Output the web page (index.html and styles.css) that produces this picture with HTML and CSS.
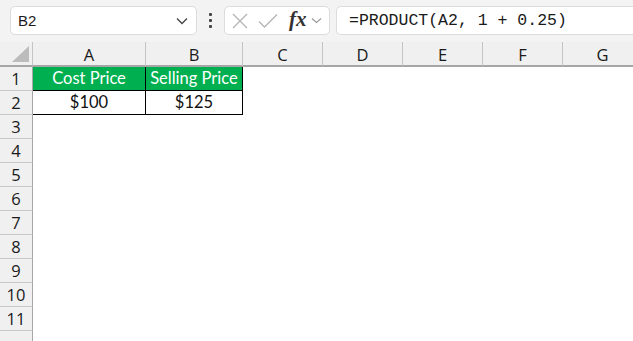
FILE: index.html
```html
<!DOCTYPE html>
<html>
<head>
<meta charset="utf-8">
<link rel="stylesheet" href="styles.css">
</head>
<body>
<div class="toolbar">
  <div class="namebox">
    <span class="name">B2</span>
    <svg class="chev" width="12" height="8" viewBox="0 0 12 8"><path d="M1 1.5 L6 6.5 L11 1.5" fill="none" stroke="#444" stroke-width="1.3"/></svg>
  </div>
  <div class="dots"><span></span><span></span><span></span></div>
  <div class="fxbox">
    <svg class="ico" width="16" height="16" viewBox="0 0 16 16"><path d="M1 1 L15 15 M15 1 L1 15" stroke="#b4b4b4" stroke-width="1.3" fill="none"/></svg>
    <svg class="ico" width="20" height="16" viewBox="0 0 20 16"><path d="M1 8.5 L6.5 14 L19 1.5" stroke="#b4b4b4" stroke-width="1.3" fill="none"/></svg>
    <span class="fx">fx</span>
    <svg class="chev2" width="11" height="7" viewBox="0 0 11 7"><path d="M1 1.5 L5.5 5.5 L10 1.5" fill="none" stroke="#999" stroke-width="1.1"/></svg>
  </div>
  <div class="formula">=PRODUCT(A2, 1 + 0.25)</div>
</div>
<div class="sheet">
  <div class="corner"><svg width="17" height="16" viewBox="0 0 17 16"><path d="M17 0 L17 16 L0 16 Z" fill="#bcbcbc"/></svg></div>
  <div class="ch">A</div><div class="ch">B</div><div class="ch">C</div><div class="ch">D</div><div class="ch">E</div><div class="ch">F</div><div class="ch">G</div>

  <div class="rh">1</div><div class="c hd">Cost Price</div><div class="c hd">Selling Price</div><div class="c"></div><div class="c"></div><div class="c"></div><div class="c"></div><div class="c"></div>
  <div class="rh">2</div><div class="c dt">$100</div><div class="c dt">$125</div><div class="c"></div><div class="c"></div><div class="c"></div><div class="c"></div><div class="c"></div>
  <div class="rh">3</div><div class="c"></div><div class="c"></div><div class="c"></div><div class="c"></div><div class="c"></div><div class="c"></div><div class="c"></div>
  <div class="rh">4</div><div class="c"></div><div class="c"></div><div class="c"></div><div class="c"></div><div class="c"></div><div class="c"></div><div class="c"></div>
  <div class="rh">5</div><div class="c"></div><div class="c"></div><div class="c"></div><div class="c"></div><div class="c"></div><div class="c"></div><div class="c"></div>
  <div class="rh">6</div><div class="c"></div><div class="c"></div><div class="c"></div><div class="c"></div><div class="c"></div><div class="c"></div><div class="c"></div>
  <div class="rh">7</div><div class="c"></div><div class="c"></div><div class="c"></div><div class="c"></div><div class="c"></div><div class="c"></div><div class="c"></div>
  <div class="rh">8</div><div class="c"></div><div class="c"></div><div class="c"></div><div class="c"></div><div class="c"></div><div class="c"></div><div class="c"></div>
  <div class="rh">9</div><div class="c"></div><div class="c"></div><div class="c"></div><div class="c"></div><div class="c"></div><div class="c"></div><div class="c"></div>
  <div class="rh">10</div><div class="c"></div><div class="c"></div><div class="c"></div><div class="c"></div><div class="c"></div><div class="c"></div><div class="c"></div>
  <div class="rh">11</div><div class="c"></div><div class="c"></div><div class="c"></div><div class="c"></div><div class="c"></div><div class="c"></div><div class="c"></div>
  <div class="rh"></div><div class="c"></div><div class="c"></div><div class="c"></div><div class="c"></div><div class="c"></div><div class="c"></div><div class="c"></div>
</div>
</body>
</html>
```

FILE: styles.css
```css
* { box-sizing: border-box; }
html, body { margin: 0; padding: 0; }
body {
  width: 633px;
  height: 341px;
  overflow: hidden;
  background: #f3f3f3;
  font-family: "Open Sans", "Noto Sans", sans-serif;
  color: #1a1a1a;
}
.toolbar {
  height: 42px;
  display: flex;
  align-items: flex-start;
  padding: 6px 0 0 10px;
  background: #f3f3f3;
}
.namebox {
  width: 187px;
  height: 29px;
  background: #fff;
  border: 1px solid #dcdcdc;
  border-radius: 5px;
  display: flex;
  align-items: center;
  justify-content: space-between;
  padding: 0 8px 0 7px;
}
.name {
  font-family: "Liberation Sans", Arial, sans-serif;
  font-size: 15px;
  color: #1b1b1b;
}
.dots {
  width: 27px;
  height: 29px;
  display: flex;
  flex-direction: column;
  align-items: center;
  justify-content: center;
  gap: 3px;
}
.dots span {
  width: 3px;
  height: 3px;
  background: #444;
  border-radius: 1px;
}
.fxbox {
  width: 106px;
  height: 29px;
  background: #fff;
  border: 1px solid #dcdcdc;
  border-radius: 5px;
  display: flex;
  align-items: center;
  padding: 0 0 0 7px;
}
.ico { flex: none; margin-right: 10px; }
.ico + .ico { margin-right: 11px; }
.fx {
  font-family: "Liberation Serif", "DejaVu Serif", serif;
  font-style: italic;
  font-weight: bold;
  font-size: 21px;
  color: #333;
  line-height: 1;
  margin-top: -3px;
  margin-right: 4px;
}
.chev2 { flex: none; }
.formula {
  margin-left: 6px;
  flex: 1;
  height: 29px;
  background: #fff;
  border: 1px solid #dcdcdc;
  border-right: none;
  border-radius: 5px 0 0 5px;
  padding-left: 12px;
  font-family: "Liberation Mono", "DejaVu Sans Mono", monospace;
  font-size: 16.5px;
  line-height: 27px;
  color: #1a1a1a;
}
.sheet {
  display: grid;
  grid-template-columns: 33px 113px 97px 80px 80px 80px 80px 80px;
  grid-template-rows: 25px repeat(12, 24px);
  background: #fff;
}
.corner {
  background: #f0f0f0;
  border-right: 1px solid #c4c4c4;
  border-bottom: 2px solid #a6a6a6;
  display: flex;
  align-items: flex-end;
  justify-content: flex-end;
  padding: 0 3px 3px 0;
}
.ch {
  background: #f0f0f0;
  border-right: 1px solid #c4c4c4;
  border-bottom: 2px solid #a6a6a6;
  text-align: center;
  font-size: 16.5px;
  line-height: 24px;
  color: #1a1a1a;
  padding-top: 1px;
}
.rh {
  background: #f0f0f0;
  border-right: 1px solid #a6a6a6;
  border-bottom: 1px solid #c8c8c8;
  text-align: center;
  font-size: 16.5px;
  line-height: 24px;
  color: #1a1a1a;
}
.c { background: #fff; }
.hd, .dt {
  border-right: 1px solid #000;
  border-bottom: 1px solid #000;
  text-align: center;
  font-family: "Lato", "Open Sans", sans-serif;
  font-size: 16.5px;
  line-height: 23px;
}
.hd { background: #00b050; color: #fff; }
.dt { color: #111; }
```
